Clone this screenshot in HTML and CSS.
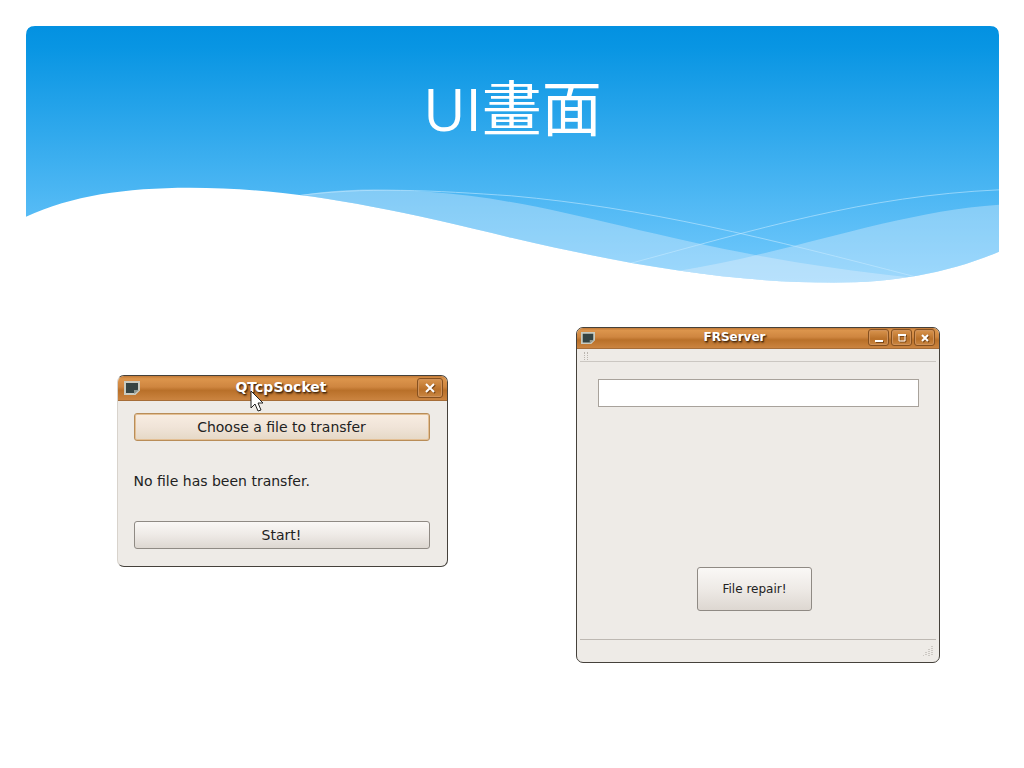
FILE: index.html
```
<!DOCTYPE html>
<html lang="zh-Hant">
  <head>
    <meta charset="utf-8" />
    <title>UI畫面</title>
    <link rel="stylesheet" href="styles.css">
  </head>

  <body>
    <header class="banner">
      <svg class="waves" viewBox="0 0 974 258" aria-hidden="true">
        <defs>
          <linearGradient id="sky" x1="0" y1="0" x2="0" y2="1">
            <stop offset="0" stop-color="#0391e1" />
            <stop offset="0.08" stop-color="#0895e3" />
            <stop offset="1" stop-color="#76cbfd" />
          </linearGradient>
          <clipPath id="shape">
            <path d="M0 191V9Q0 0 9 0H965Q974 0 974 9V226C924 247 869 257 809 257C714 257 614 242 486 212C354 180 264 162 164 162C99 162 46 170 0 191Z" />
          </clipPath>
        </defs>
        <g clip-path="url(#shape)">
          <rect width="974" height="258" fill="url(#sky)" />
          <path class="band" d="M264 171C310 163 350 162 402 166C550 176 650 228 889 252V258H264Z" />
          <path class="band" d="M654 245C770 226 870 186 974 179V258H654Z" />
          <path class="line" d="M264 171C340 160 410 165 486 170C620 182 740 212 894 252" />
          <path class="line" d="M600 239C730 204 840 170 974 164" />
        </g>
      </svg>
      <h1><span class="latin">UI</span><span class="cjk">畫面</span></h1>
    </header>

    <main class="windows">
      <section class="window socket">
        <div class="titlebar">
          <svg class="app-icon" viewBox="0 0 16 14" aria-hidden="true">
            <path d="M1 1H15V9L11 13H1Z" fill="#354443" stroke="#c9cbc0" stroke-width="2" />
            <path d="M10 13V9H15Z" fill="#8f9891" />
          </svg>
          <h2>QTcpSocket</h2>
          <button type="button" class="win-button" aria-label="Close">
            <svg viewBox="0 0 10 10"><path d="M1 1L9 9M9 1L1 9" /></svg>
          </button>
          <svg class="cursor" viewBox="0 0 14 22" aria-hidden="true">
            <path d="M1 1V18L5 14L8 21L11 20L8 13H13Z" />
          </svg>
        </div>
        <div class="socket-body">
          <button type="button" class="push focused">Choose a file to transfer</button>
          <p>No file has been transfer.</p>
          <button type="button" class="push">Start!</button>
        </div>
      </section>

      <section class="window server">
        <div class="titlebar">
          <svg class="app-icon" viewBox="0 0 16 14" aria-hidden="true">
            <path d="M1 1H15V9L11 13H1Z" fill="#354443" stroke="#c9cbc0" stroke-width="2" />
            <path d="M10 13V9H15Z" fill="#8f9891" />
          </svg>
          <h2>FRServer</h2>
          <button type="button" class="win-button" aria-label="Minimize">
            <svg viewBox="0 0 10 10"><path d="M1 8H9" /></svg>
          </button>
          <button type="button" class="win-button" aria-label="Maximize">
            <svg viewBox="0 0 10 10"><path d="M1 2H9" /><path class="thin" d="M2 2V8H8V2" /></svg>
          </button>
          <button type="button" class="win-button" aria-label="Close">
            <svg viewBox="0 0 10 10"><path d="M2 2L8 8M8 2L2 8" /></svg>
          </button>
        </div>
        <div class="toolbar"><span class="handle"></span></div>
        <div class="server-body">
          <input type="text" class="path" aria-label="File">
          <button type="button" class="push repair">File repair!</button>
        </div>
        <div class="statusbar">
          <svg class="grip" viewBox="0 0 10 10" aria-hidden="true">
            <path d="M9 0V10M6 3V10M3 6V10M0 9V10" />
          </svg>
        </div>
      </section>
    </main>
  </body>
</html>
```
FILE: styles.css
```
* {
  box-sizing: border-box;
}
body {
  margin: 0;
  padding: 26px 25px 24px 26px;
  background-color: #fff;
  font-family: "DejaVu Sans", sans-serif;
  color: #222;
}

/* Banner */
.banner {
  display: grid;
}
.waves,
.banner h1 {
  grid-area: 1 / 1;
}
.waves {
  display: block;
  width: 100%;
}
.band {
  fill: #e6f2fb;
  fill-opacity: 0.36;
}
.line {
  fill: none;
  stroke: #c4eaff;
  stroke-opacity: 0.6;
}
.banner h1 {
  margin: 39px 0 0;
  text-align: center;
  font-weight: 400;
  line-height: 80px;
  color: #fff;
}
.latin {
  font-family: "Open Sans", sans-serif;
  font-size: 58px;
}
.cjk {
  font-family: "Noto Sans CJK TC", sans-serif;
  font-size: 60px;
}

/* Windows */
.windows {
  display: grid;
  grid-template-columns: 1fr 1fr;
  justify-items: center;
  align-items: start;
  margin-top: 43px;
  padding: 0 3px 0 18px;
}
.window {
  border: 1px solid #45413b;
  border-radius: 7px;
  background-color: #eeebe7;
}
.titlebar {
  position: relative;
  display: flex;
  align-items: center;
  gap: 2px;
  padding: 0 4px;
  border-bottom: 1px solid #a66d38;
  border-radius: 6px 6px 0 0;
  background: linear-gradient(#c27a38, #dc954c 12%, #cf8640 45%, #b97029 60%, #cb8440);
}
.titlebar h2 {
  flex: 1;
  margin: 0;
  padding: 0 0 2px 6px;
  text-align: center;
  font-weight: 700;
  color: #fff;
  text-shadow: 1px 1px 1px #4a2a0c, 1px 2px 2px #6b401a;
}
.app-icon {
  width: 14px;
}
.win-button {
  display: flex;
  align-items: center;
  justify-content: center;
  padding: 0;
  border: 1px solid #85501f;
  border-radius: 3px;
  background: linear-gradient(#d9954f, #b97029 60%, #cb8843);
  box-shadow: inset 0 0 0 1px #d0925a;
}
.win-button svg {
  width: 10px;
  filter: drop-shadow(1px 1px 0 #7a4718);
}
.win-button path {
  fill: none;
  stroke: #fff;
  stroke-width: 2;
}
.win-button .thin {
  stroke-width: 1;
}
.push {
  border: 1px solid #8f8a84;
  border-radius: 3px;
  background: linear-gradient(#faf8f6, #eeeae6 50%, #ddd7d1);
  font-family: inherit;
  color: #222;
}
.focused {
  border-color: #b98d58;
  background: linear-gradient(#f8ede2, #f0e4d8 50%, #e5d8c6);
  box-shadow: inset 0 0 0 1px #e3bf94;
}

/* QTcpSocket */
.socket {
  width: 331px;
  max-width: 100%;
  margin-top: 48px;
  border-left-color: #d8d3cc;
}
.socket .titlebar {
  height: 25px;
  padding-left: 6px;
}
.socket .app-icon {
  width: 16px;
}
.socket h2 {
  font-size: 14px;
}
.socket .win-button {
  width: 26px;
  height: 20px;
}
.socket-body {
  display: flex;
  flex-direction: column;
  padding: 12px 17px 17px 16px;
  font-size: 14px;
}
.socket-body .push {
  height: 28px;
  font-size: 14px;
}
.socket-body p {
  margin: 30px 0;
  line-height: 20px;
}
.cursor {
  position: absolute;
  left: 132px;
  top: 14px;
  width: 14px;
}
.cursor path {
  fill: #fff;
  stroke: #222;
  stroke-width: 1;
}

/* FRServer */
.server {
  width: 364px;
  max-width: 100%;
}
.server .titlebar {
  height: 21px;
}
.server h2 {
  font-size: 12px;
}
.server .win-button {
  width: 21px;
  height: 17px;
}
.toolbar {
  height: 13px;
  margin: 0 3px;
  padding: 3px 4px;
  border-bottom: 1px solid #cbc7c2;
}
.handle {
  display: block;
  width: 4px;
  height: 8px;
  border: 1px dotted #bbb6b0;
  border-width: 0 1px;
}
.server-body {
  display: flex;
  flex-direction: column;
  align-items: center;
  padding: 17px 20px 28px 21px;
}
.path {
  width: 100%;
  height: 28px;
  border: 1px solid #a8a29b;
  background-color: #fff;
}
.repair {
  width: 115px;
  height: 44px;
  margin-top: 160px;
  margin-right: 8px;
  font-size: 12px;
}
.statusbar {
  display: flex;
  justify-content: flex-end;
  align-items: flex-end;
  height: 23px;
  margin: 0 3px;
  padding: 6px 3px;
  border-top: 1px solid #bdb8b2;
}
.grip {
  width: 10px;
}
.grip path {
  stroke: #aaa59f;
  stroke-width: 1;
  stroke-dasharray: 1 1;
}
```
